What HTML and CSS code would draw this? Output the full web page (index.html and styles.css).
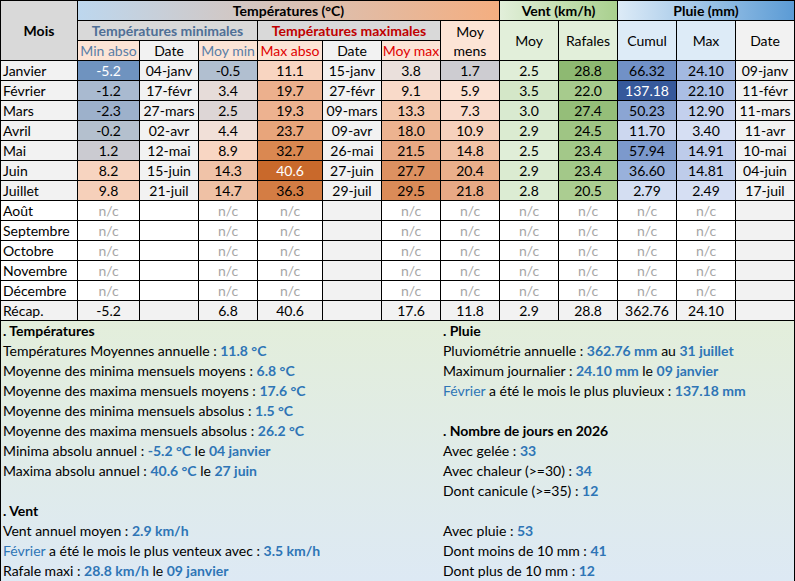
FILE: index.html
```html
<!DOCTYPE html>
<html lang="fr">
<head>
<meta charset="utf-8">
<title>Relevés 2026</title>
<link rel="stylesheet" href="styles.css">
</head>
<body>
<div class="sheet">
  <div class="grid">
    <div class="c h-mois">Mois</div>
    <div class="c h-temp">Températures (°C)</div>
    <div class="c h-vent">Vent (km/h)</div>
    <div class="c h-pluie">Pluie (mm)</div>

    <div class="c h-sub min">Températures minimales</div>
    <div class="c h-sub max">Températures maximales</div>
    <div class="c h-two peach"><span>Moy</span><span>mens</span></div>
    <div class="c h-tall green">Moy</div>
    <div class="c h-tall green">Rafales</div>
    <div class="c h-tall blue">Cumul</div>
    <div class="c h-tall blue">Max</div>
    <div class="c h-tall light">Date</div>

    <div class="c peach t-min">Min abso</div>
    <div class="c light">Date</div>
    <div class="c peach t-min">Moy min</div>
    <div class="c peach t-max">Max abso</div>
    <div class="c light">Date</div>
    <div class="c peach t-max">Moy max</div>

    <!-- Janvier -->
    <div class="c m">Janvier</div>
    <div class="c w" style="background:#6f93bf">-5.2</div>
    <div class="c light">04-janv</div>
    <div class="c" style="background:#b1bfd0">-0.5</div>
    <div class="c" style="background:#f8d5c1">11.1</div>
    <div class="c light">15-janv</div>
    <div class="c" style="background:#eae0dc">3.8</div>
    <div class="c" style="background:#cdccd1">1.7</div>
    <div class="c" style="background:#e0eed8">2.5</div>
    <div class="c" style="background:#8eb972">28.8</div>
    <div class="c" style="background:#7191c7">66.32</div>
    <div class="c" style="background:#a3b9e1">24.10</div>
    <div class="c light">09-janv</div>

    <!-- Février -->
    <div class="c m">Février</div>
    <div class="c" style="background:#a9bad0">-1.2</div>
    <div class="c light">17-févr</div>
    <div class="c" style="background:#e6dcd9">3.4</div>
    <div class="c" style="background:#ecb08d">19.7</div>
    <div class="c light">27-févr</div>
    <div class="c" style="background:#f9dac9">9.1</div>
    <div class="c" style="background:#fbe2d4">5.9</div>
    <div class="c" style="background:#d4e7c8">3.5</div>
    <div class="c" style="background:#a7cb8d">22.0</div>
    <div class="c w" style="background:#36599b">137.18</div>
    <div class="c" style="background:#aabee4">22.10</div>
    <div class="c light">11-févr</div>

    <!-- Mars -->
    <div class="c m">Mars</div>
    <div class="c" style="background:#9db1cb">-2.3</div>
    <div class="c light">27-mars</div>
    <div class="c" style="background:#ddd6d6">2.5</div>
    <div class="c" style="background:#edb290">19.3</div>
    <div class="c light">09-mars</div>
    <div class="c" style="background:#f3c7ac">13.3</div>
    <div class="c" style="background:#f9dbcc">7.3</div>
    <div class="c" style="background:#d9ead0">3.0</div>
    <div class="c" style="background:#95be79">27.4</div>
    <div class="c" style="background:#8ba5d3">50.23</div>
    <div class="c" style="background:#c3d0ed">12.90</div>
    <div class="c light">11-mars</div>

    <!-- Avril -->
    <div class="c m">Avril</div>
    <div class="c" style="background:#b4c0ce">-0.2</div>
    <div class="c light">02-avr</div>
    <div class="c" style="background:#f1e0d8">4.4</div>
    <div class="c" style="background:#e8a57b">23.7</div>
    <div class="c light">09-avr</div>
    <div class="c" style="background:#ecb390">18.0</div>
    <div class="c" style="background:#f6d1bc">10.9</div>
    <div class="c" style="background:#dbebd1">2.9</div>
    <div class="c" style="background:#9fc584">24.5</div>
    <div class="c" style="background:#ccd7ef">11.70</div>
    <div class="c" style="background:#d6dff3">3.40</div>
    <div class="c light">11-avr</div>

    <!-- Mai -->
    <div class="c m">Mai</div>
    <div class="c" style="background:#cbcbd1">1.2</div>
    <div class="c light">12-mai</div>
    <div class="c" style="background:#f8d6c3">8.9</div>
    <div class="c" style="background:#da8851">32.7</div>
    <div class="c light">26-mai</div>
    <div class="c" style="background:#e8a984">21.5</div>
    <div class="c" style="background:#f1c3a7">14.8</div>
    <div class="c" style="background:#e0eed8">2.5</div>
    <div class="c" style="background:#a3c889">23.4</div>
    <div class="c" style="background:#7c99cc">57.94</div>
    <div class="c" style="background:#bdcbea">14.91</div>
    <div class="c light">10-mai</div>

    <!-- Juin -->
    <div class="c m">Juin</div>
    <div class="c" style="background:#f7d4c0">8.2</div>
    <div class="c light">15-juin</div>
    <div class="c" style="background:#f0c3a8">14.3</div>
    <div class="c w" style="background:#c9692b">40.6</div>
    <div class="c light">27-juin</div>
    <div class="c" style="background:#dd9161">27.7</div>
    <div class="c" style="background:#eaaf8b">20.4</div>
    <div class="c" style="background:#dbebd1">2.9</div>
    <div class="c" style="background:#a3c889">23.4</div>
    <div class="c" style="background:#99b1db">36.60</div>
    <div class="c" style="background:#beccea">14.81</div>
    <div class="c light">04-juin</div>

    <!-- Juillet -->
    <div class="c m">Juillet</div>
    <div class="c" style="background:#f6d0ba">9.8</div>
    <div class="c light">21-juil</div>
    <div class="c" style="background:#efc1a5">14.7</div>
    <div class="c" style="background:#d47d44">36.3</div>
    <div class="c light">29-juil</div>
    <div class="c" style="background:#da8b58">29.5</div>
    <div class="c" style="background:#e8a985">21.8</div>
    <div class="c" style="background:#dcecd3">2.8</div>
    <div class="c" style="background:#abcd91">20.5</div>
    <div class="c" style="background:#d4def2">2.79</div>
    <div class="c" style="background:#d6dff3">2.49</div>
    <div class="c light">17-juil</div>

    <!-- Août -->
    <div class="c m white">Août</div>
    <div class="c nc">n/c</div><div class="c white"></div><div class="c nc">n/c</div><div class="c nc">n/c</div><div class="c light"></div>
    <div class="c nc">n/c</div><div class="c nc">n/c</div><div class="c nc">n/c</div><div class="c nc">n/c</div><div class="c nc">n/c</div><div class="c nc">n/c</div><div class="c light"></div>

    <!-- Septembre -->
    <div class="c m white">Septembre</div>
    <div class="c nc">n/c</div><div class="c white"></div><div class="c nc">n/c</div><div class="c nc">n/c</div><div class="c light"></div>
    <div class="c nc">n/c</div><div class="c nc">n/c</div><div class="c nc">n/c</div><div class="c nc">n/c</div><div class="c nc">n/c</div><div class="c nc">n/c</div><div class="c light"></div>

    <!-- Octobre -->
    <div class="c m white">Octobre</div>
    <div class="c nc">n/c</div><div class="c white"></div><div class="c nc">n/c</div><div class="c nc">n/c</div><div class="c light"></div>
    <div class="c nc">n/c</div><div class="c nc">n/c</div><div class="c nc">n/c</div><div class="c nc">n/c</div><div class="c nc">n/c</div><div class="c nc">n/c</div><div class="c light"></div>

    <!-- Novembre -->
    <div class="c m white">Novembre</div>
    <div class="c nc">n/c</div><div class="c white"></div><div class="c nc">n/c</div><div class="c nc">n/c</div><div class="c light"></div>
    <div class="c nc">n/c</div><div class="c nc">n/c</div><div class="c nc">n/c</div><div class="c nc">n/c</div><div class="c nc">n/c</div><div class="c nc">n/c</div><div class="c light"></div>

    <!-- Décembre -->
    <div class="c m white">Décembre</div>
    <div class="c nc">n/c</div><div class="c white"></div><div class="c nc">n/c</div><div class="c nc">n/c</div><div class="c light"></div>
    <div class="c nc">n/c</div><div class="c nc">n/c</div><div class="c nc">n/c</div><div class="c nc">n/c</div><div class="c nc">n/c</div><div class="c nc">n/c</div><div class="c light"></div>

    <!-- Récap -->
    <div class="c m">Récap.</div>
    <div class="c light">-5.2</div><div class="c light"></div><div class="c light">6.8</div><div class="c light">40.6</div><div class="c light"></div>
    <div class="c light">17.6</div><div class="c light">11.8</div><div class="c light">2.9</div><div class="c light">28.8</div><div class="c light">362.76</div><div class="c light">24.10</div><div class="c light"></div>
  </div>

  <div class="summary">
    <div class="col">
      <div class="ln hd">. Températures</div>
      <div class="ln">Températures Moyennes annuelle : <b>11.8 °C</b></div>
      <div class="ln">Moyenne des minima mensuels moyens : <b>6.8 °C</b></div>
      <div class="ln">Moyenne des maxima mensuels moyens : <b>17.6 °C</b></div>
      <div class="ln">Moyenne des minima mensuels absolus : <b>1.5 °C</b></div>
      <div class="ln">Moyenne des maxima mensuels absolus : <b>26.2 °C</b></div>
      <div class="ln">Minima absolu annuel : <b>-5.2 °C</b> le <b>04 janvier</b></div>
      <div class="ln">Maxima absolu annuel : <b>40.6 °C</b> le <b>27 juin</b></div>
      <div class="ln"></div>
      <div class="ln hd">. Vent</div>
      <div class="ln">Vent annuel moyen : <b>2.9 km/h</b></div>
      <div class="ln"><span class="bl">Février</span> a été le mois le plus venteux avec : <b>3.5 km/h</b></div>
      <div class="ln">Rafale maxi : <b>28.8 km/h</b> le <b>09 janvier</b></div>
    </div>
    <div class="col">
      <div class="ln hd">. Pluie</div>
      <div class="ln">Pluviométrie annuelle : <b>362.76 mm</b> au <b>31 juillet</b></div>
      <div class="ln">Maximum journalier : <b>24.10 mm</b> le <b>09 janvier</b></div>
      <div class="ln"><span class="bl">Février</span> a été le mois le plus pluvieux : <b>137.18 mm</b></div>
      <div class="ln"></div>
      <div class="ln hd">. Nombre de jours en 2026</div>
      <div class="ln">Avec gelée : <b>33</b></div>
      <div class="ln">Avec chaleur (&gt;=30) : <b>34</b></div>
      <div class="ln">Dont canicule (&gt;=35) : <b>12</b></div>
      <div class="ln"></div>
      <div class="ln">Avec pluie : <b>53</b></div>
      <div class="ln">Dont moins de 10 mm : <b>41</b></div>
      <div class="ln">Dont plus de 10 mm : <b>12</b></div>
    </div>
  </div>
</div>
</body>
</html>
```

FILE: styles.css
```css
html, body {
  margin: 0;
  padding: 0;
  background: #ffffff;
}

body {
  font-family: "Lato", "Open Sans", sans-serif;
  font-size: 14px;
  color: #000;
}

.sheet {
  width: 795px;
  height: 581px;
  box-sizing: border-box;
  background: #000;
  padding: 1px;
  display: flex;
  flex-direction: column;
  gap: 1px;
}

.grid {
  display: grid;
  grid-template-columns: 76px 61px 58px 58px 64px 58px 58px 58px 58px 58px 58px 58px 58px;
  grid-auto-rows: 19px;
  gap: 1px;
}

.c {
  background: #fff;
  display: flex;
  align-items: center;
  justify-content: center;
  line-height: 19px;
  white-space: nowrap;
  overflow: hidden;
}

.h-mois {
  grid-row: 1 / span 3;
  background: #d9d9d9;
  font-weight: bold;
}

.h-temp {
  grid-column: 2 / span 7;
  background: linear-gradient(90deg, #bdd7ee, #f4ae80);
  font-weight: bold;
}

.h-vent {
  grid-column: 9 / span 2;
  background: linear-gradient(90deg, #e2efda, #a9d08e);
  font-weight: bold;
}

.h-pluie {
  grid-column: 11 / span 3;
  background: linear-gradient(90deg, #ddebf7, #5b9bd5);
  font-weight: bold;
}

.h-sub {
  background: #d9d9d9;
  font-weight: bold;
}

.h-sub.min {
  grid-column: 2 / span 3;
  color: #4f6f96;
}

.h-sub.max {
  grid-column: 5 / span 3;
  color: #c00000;
}

.h-two {
  grid-row: span 2;
  flex-direction: column;
}

.h-tall {
  grid-row: span 2;
}

.peach { background: #fce4d6; }
.green { background: #e2efda; }
.blue { background: #ddebf7; }
.light { background: #f2f2f2; }
.white { background: #fff; }

.t-min { color: #5a7ea6; }
.t-max { color: #e00000; }

.m {
  background: #f2f2f2;
  justify-content: flex-start;
  padding-left: 2px;
}

.m.white { background: #fff; }

.w { color: #fff; }

.nc { color: #a6a6a6; }

.summary {
  flex: 1;
  background: linear-gradient(180deg, #e3eedb, #dde9f4);
  display: grid;
  grid-template-columns: 440px 1fr;
}

.col {
  padding-left: 2px;
}

.ln {
  height: 20px;
  line-height: 20px;
  white-space: nowrap;
}

.ln.hd { font-weight: bold; }

.ln b {
  color: #2e75b6;
  font-weight: bold;
}

.bl { color: #2e75b6; }
```
